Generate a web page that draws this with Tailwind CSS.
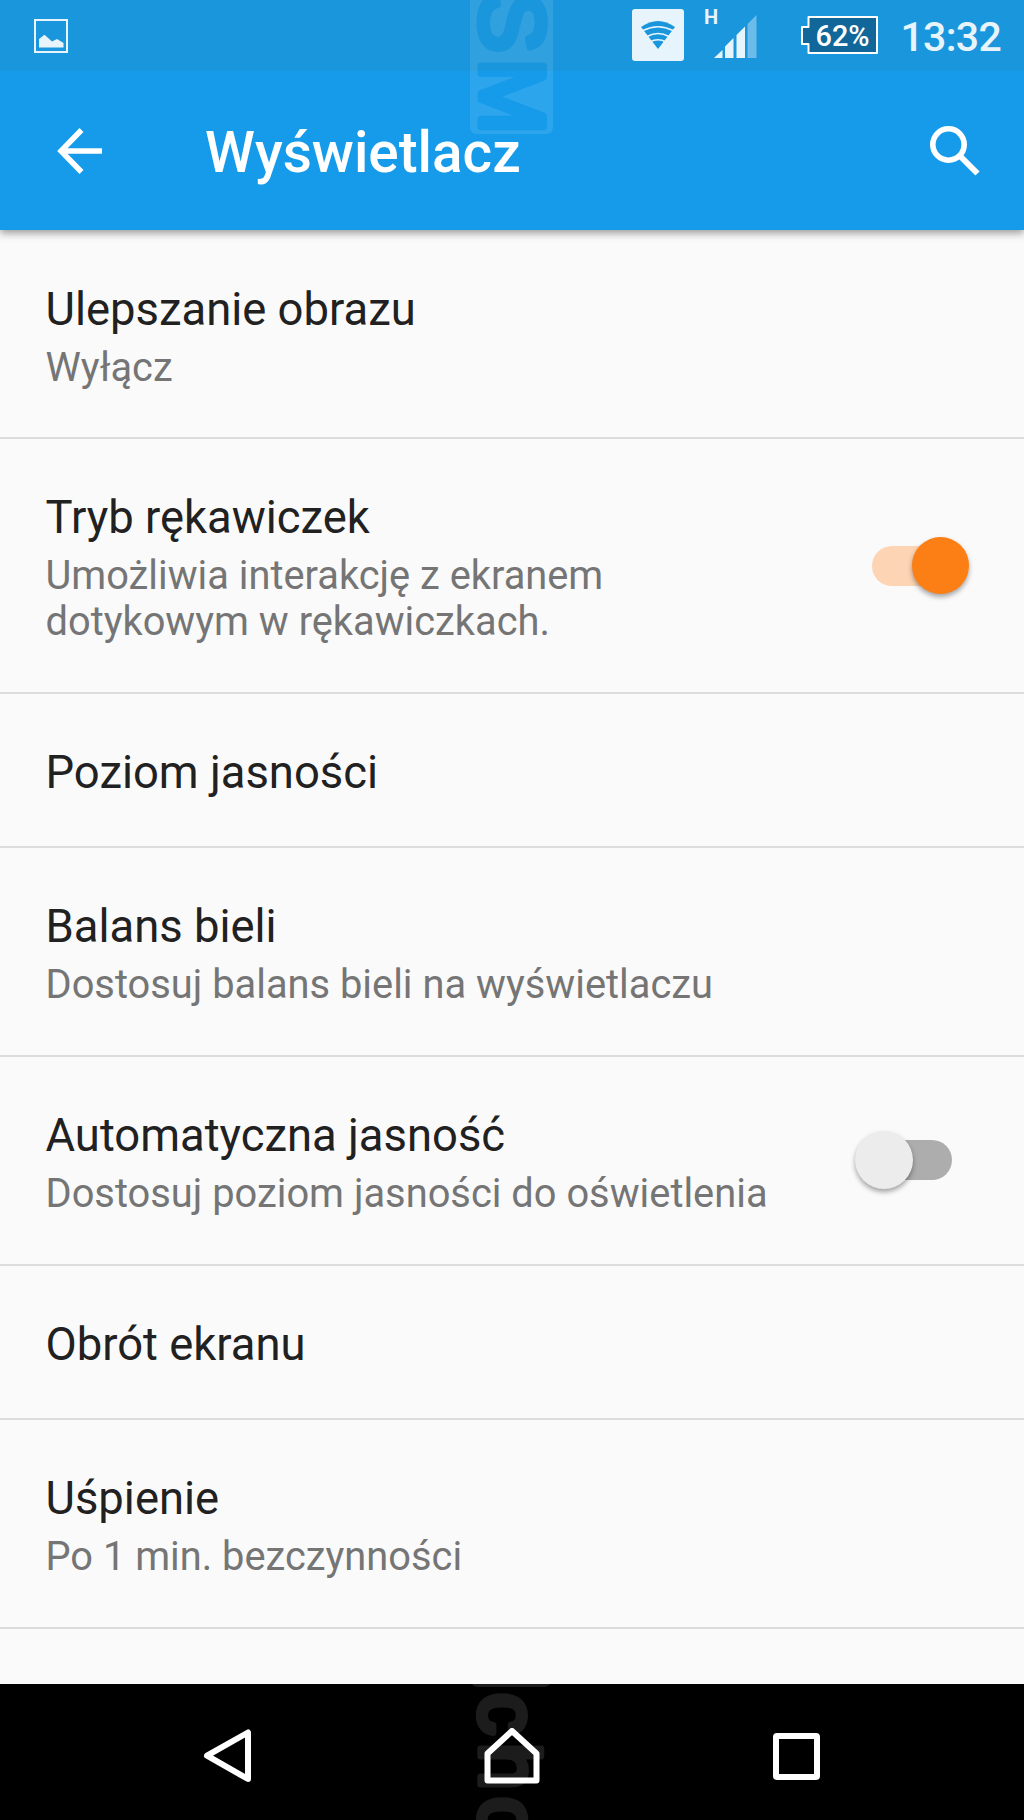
<!DOCTYPE html>
<html lang="pl">
<head>
  <meta charset="UTF-8">
  <title>Wyświetlacz</title>
  <script src="https://cdn.jsdelivr.net/npm/@tailwindcss/browser@4"></script>
</head>
<body class="bg-[#fafafa]">
<div class="relative w-[1024px] h-[1820px] overflow-hidden flex flex-col bg-[#fafafa] font-['Roboto',sans-serif]">

  <!-- Status bar -->
  <div class="relative z-10 h-[71px] shrink-0 bg-[#1a96dc] flex items-start pl-[34px] pr-[23px] text-[#e8f4fc]">
    <svg class="mt-[19px]" width="34" height="34" viewBox="0 0 34 34">
      <rect x="1" y="1" width="32" height="32" fill="none" stroke="#e8f4fc" stroke-width="2"/>
      <path d="M5 28.500V20l5.500-4.200L18 22.500l5-2.500 6.500 4v4.500z" fill="#e8f4fc"/>
    </svg>
    <svg class="ml-auto mt-[9px]" width="52" height="52" viewBox="0 0 52 52">
      <rect width="52" height="52" rx="3" fill="#e8f4fc"/>
      <path d="M9 18Q26 6 43 18L26 40Z" fill="#1a96dc"/>
      <g fill="none" stroke="#e8f4fc" stroke-width="1.500">
        <path d="M11 21.500Q26 14 41 21.500"/>
        <path d="M15 27.500Q26 21.500 37 27.500"/>
        <path d="M18 33Q26 28.500 34 33"/>
      </g>
    </svg>
    <svg class="ml-[20px] mt-[8px] overflow-visible" width="53" height="52" viewBox="0 0 53 52">
      <text x="0" y="16" font-size="20" font-weight="700" fill="#e8f4fc">H</text>
      <g fill="#e8f4fc">
        <path d="M10 50l8.500-8v8z"/>
        <path d="M21 50V38.500l8.500-8.500v20z"/>
        <path d="M32.500 50V27l8.500-8.500V50z"/>
        <path d="M43.500 50V16l9-9v43z" opacity=".4"/>
      </g>
    </svg>
    <svg class="ml-[43px] mt-[15px]" width="78" height="40" viewBox="0 0 78 40">
      <path d="M8.500 2H77v36H8.500v-9H2V12h6.500z" fill="#12679a" stroke="#fff" stroke-width="2" stroke-linejoin="round"/>
      <text x="15.500" y="30.500" font-size="29.500" font-weight="500" fill="#fff" textLength="54" lengthAdjust="spacingAndGlyphs">62%</text>
    </svg>
    <span class="ml-[22px] mt-[13px] text-[41px] leading-[48px] w-[101px] text-right font-medium tracking-[-0.7px]">13:32</span>
  </div>

  <!-- Toolbar -->
  <div class="h-[159px] shrink-0 bg-[#159bea] flex items-center pl-[57px] pr-[44px] shadow-[0_3px_8px_rgba(0,0,0,0.4)]">
    <svg width="45" height="46" viewBox="0 0 45 46" fill="none" stroke="#fff" stroke-width="5.500">
      <path d="M45 23H5M24.500 2L4 23l20.500 21"/>
    </svg>
    <h1 class="ml-[103px] mt-[4px] text-[56.7px] leading-[67px] font-medium text-white">Wyświetlacz</h1>
    <svg class="ml-auto" width="50" height="50" viewBox="0 0 50 50" fill="none" stroke="#fff">
      <circle cx="18.500" cy="18.500" r="15.700" stroke-width="5.600"/>
      <path d="M31 31L47.500 47.500" stroke-width="6"/>
    </svg>
  </div>

  <!-- Preferences -->
  <ul class="flex-1 overflow-hidden text-[45.4px] leading-[54px] text-[#212121]">
    <li class="h-[209px] px-[45.5px] pt-[52.5px] border-b-2 border-[#dcdcdc]">
      <div>Ulepszanie obrazu</div>
      <div class="mt-[7px] text-[39.8px] leading-[47px] text-[#757575]">Wyłącz</div>
    </li>
    <li class="h-[255px] pl-[45.5px] pr-[55px] pt-[52px] border-b-2 border-[#dcdcdc] flex justify-between">
      <div>
        <div>Tryb rękawiczek</div>
        <div class="mt-[8px] text-[39.8px] leading-[46px] text-[#757575]">Umożliwia interakcję z ekranem<br>dotykowym w rękawiczkach.</div>
      </div>
      <div class="relative mt-[55px] w-[97px] h-[40px]">
        <div class="w-[78px] h-[40px] rounded-full bg-[#fdd5b4]"></div>
        <div class="absolute right-0 -top-[9px] size-[57px] rounded-full bg-[#fb7f14] shadow-[0_3px_5px_rgba(0,0,0,0.35)]"></div>
      </div>
    </li>
    <li class="h-[154px] px-[45.5px] pt-[52px] border-b-2 border-[#dcdcdc]">Poziom jasności</li>
    <li class="h-[209px] px-[45.5px] pt-[52px] border-b-2 border-[#dcdcdc]">
      <div>Balans bieli</div>
      <div class="mt-[7px] text-[39.85px] leading-[47px] text-[#757575]">Dostosuj balans bieli na wyświetlaczu</div>
    </li>
    <li class="h-[209px] pl-[45.5px] pr-[72px] pt-[52px] border-b-2 border-[#dcdcdc] flex justify-between">
      <div>
        <div>Automatyczna jasność</div>
        <div class="mt-[7px] text-[39.85px] leading-[47px] text-[#757575]">Dostosuj poziom jasności do oświetlenia</div>
      </div>
      <div class="relative mt-[31px] w-[97px] h-[40px]">
        <div class="ml-auto w-[78px] h-[40px] rounded-full bg-[#adadad]"></div>
        <div class="absolute left-0 -top-[9px] size-[58px] rounded-full bg-[#ececec] shadow-[0_3px_5px_rgba(0,0,0,0.35)]"></div>
      </div>
    </li>
    <li class="h-[154px] px-[45.5px] pt-[52px] border-b-2 border-[#dcdcdc]">Obrót ekranu</li>
    <li class="h-[209px] px-[45.5px] pt-[52px] border-b-2 border-[#dcdcdc]">
      <div>Uśpienie</div>
      <div class="mt-[7px] text-[39.8px] leading-[47px] text-[#757575]">Po 1 min. bezczynności</div>
    </li>
  </ul>

  <!-- Navigation bar, icons sit above the watermark -->
  <div class="relative h-[136px] shrink-0 bg-black">
    <svg class="absolute left-[470px] top-0" width="90" height="136" viewBox="470 1684 90 136">
      <path d="M472 1684h78q-2 3-6 3h-66q-4 0-6-3z" fill="#1c1c1c"/>
      <g transform="translate(480 1691) rotate(90)" font-family="Liberation Sans" font-size="84" fill="#1c1c1c" stroke="#1c1c1c" stroke-width="6.500" stroke-linejoin="round">
        <text x="2" y="0">c</text>
        <text x="52" y="0">h</text>
        <text x="106" y="0">o</text>
      </g>
    </svg>
    <div class="relative h-full flex items-center pt-[8px]">
      <svg class="ml-[203px]" width="48" height="54" viewBox="0 0 48 54" fill="none" stroke="#fff" stroke-width="6" stroke-linejoin="round">
        <path d="M45 3.500v46.500L4 26.700z"/>
      </svg>
      <svg class="ml-[233px]" width="56" height="56" viewBox="0 0 56 56" fill="none" stroke="#fff" stroke-width="6" stroke-linejoin="round">
        <path d="M28 3L52.500 25.500V52.500H3.500V25.500z"/>
      </svg>
      <div class="ml-[233px] size-[47px] rounded-[4px] border-[6px] border-white"></div>
    </div>
  </div>

  <!-- Watermark over the header, lettering cut out of the plate -->
  <svg class="absolute z-20 left-[470px] top-0" width="84" height="136" viewBox="470 0 84 136">
    <mask id="plate" maskUnits="userSpaceOnUse" x="470" y="-10" width="84" height="146">
      <rect x="470" y="-10" width="83" height="144" rx="6" fill="#fff"/>
      <g transform="translate(480.500 0) rotate(90)" font-family="Liberation Sans" font-size="91" fill="#000" stroke="#000" stroke-width="7" stroke-linejoin="round">
        <text x="-8" y="0">S</text>
        <text x="58.500" y="0">M</text>
      </g>
    </mask>
    <rect x="470" y="-10" width="83" height="144" rx="6" fill="#fff" fill-opacity=".1" mask="url(#plate)"/>
  </svg>
</div>
</body>
</html>
